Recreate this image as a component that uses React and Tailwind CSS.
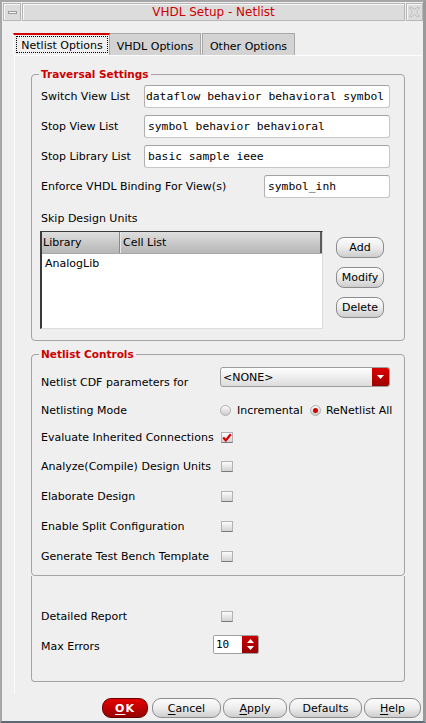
import React from "react";

function TextInput({ value, className }) {
  return (
    <div
      className={
        "h-[23px] bg-white border border-[#c6c6c6] border-t-[#a2a2a2] border-l-[#b0b0b0] rounded-[3px] flex items-center overflow-hidden whitespace-nowrap font-['DejaVu_Sans_Mono',monospace] text-[11.3px] " +
        className
      }
    >
      {value}
    </div>
  );
}

function SmallButton({ children }) {
  return (
    <div className="w-[48px] h-[21px] rounded-[8px] border border-[#8c8c8c] bg-gradient-to-b from-[#fdfdfd] via-[#ececec] to-[#cdcdcd] flex items-center justify-center">
      {children}
    </div>
  );
}

function CheckBox({ checked }) {
  return (
    <div className="w-[12px] h-[11px] border border-[#b2b2b2] border-b-[#7a7a7a] bg-gradient-to-b from-[#fcfcfc] to-[#d2d2d2] flex items-center justify-center">
      {checked && (
        <svg width="10" height="9" viewBox="0 0 10 9">
          <path d="M1.2 4.6 L3.8 7.4 L8.8 1.2" fill="none" stroke="#d40000" strokeWidth="2.2" />
        </svg>
      )}
    </div>
  );
}

function Radio({ selected }) {
  return (
    <div className="w-[11px] h-[11px] rounded-full border border-[#b0b0b0] bg-gradient-to-b from-[#fbfbfb] to-[#cbcbcb] flex items-center justify-center">
      {selected && <div className="w-[5px] h-[5px] rounded-full bg-[#d00000]" />}
    </div>
  );
}

function Row({ h, label, lw, children }) {
  return (
    <div className={"flex items-center " + h}>
      <span className={"shrink-0 " + lw}>{label}</span>
      {children}
    </div>
  );
}

function BottomButton({ className, children }) {
  return (
    <div
      className={
        "h-[20px] rounded-[9px] border border-[#8e8e8e] bg-gradient-to-b from-[#fcfcfc] via-[#ededed] to-[#cecece] flex items-center justify-center " +
        className
      }
    >
      {children}
    </div>
  );
}

export default function App() {
  return (
    <div className="w-[426px] h-[723px] flex flex-col bg-[#efefef] border-t-2 border-l-2 border-r-[3px] border-b-2 border-t-[#a6a6a6] border-l-[#a6a6a6] border-r-[#9a9a9a] border-b-[#5c6a76] font-['DejaVu_Sans',sans-serif] text-[11px] leading-[13px] text-black overflow-hidden">
      {/* Title bar */}
      <div className="mt-[1px] pl-[1px] h-[18px] flex gap-[1px] shrink-0">
        <div className="w-[18px] h-full border border-[#b6b6b6] bg-[#dcdcdc] shadow-[inset_1px_1px_0_#f7f7f7] flex items-center justify-center">
          <div className="w-[9px] h-[3px] border border-[#9c9c9c] bg-[#f6f6f6]" />
        </div>
        <div className="flex-1 h-full border border-[#b6b6b6] bg-[#dcdcdc] shadow-[inset_1px_1px_0_#f7f7f7] flex items-center justify-center text-[12px] text-[#cc0000]">
          VHDL Setup - Netlist
        </div>
        <div className="w-[17px] h-full border border-[#b6b6b6] bg-[#dcdcdc] shadow-[inset_1px_1px_0_#f7f7f7] flex items-center justify-center">
          <svg width="13" height="12" viewBox="0 0 13 12">
            <path
              d="M1.5 1.5 L4 1 L6.5 4 L9 1 L11.5 1.5 L8.5 6 L11.5 10.5 L9 11 L6.5 8 L4 11 L1.5 10.5 L4.5 6 Z"
              fill="none"
              stroke="#a8a8a8"
              strokeWidth="1"
              strokeDasharray="1 1"
            />
          </svg>
        </div>
      </div>

      {/* Tabs */}
      <div className="mt-[12px] ml-[11px] flex h-[22px] shrink-0">
        <div className="w-[97px] h-[22px] border-t-2 border-t-[#d00000] border-l border-l-[#fbfbfb] border-r border-r-[#a8a8a8] bg-[#efefef] pt-[1px] pl-[2px] pr-[1px] pb-[2px] flex">
          <div className="flex-1 border border-dotted border-black flex items-center justify-center pt-[2px]">
            Netlist Options
          </div>
        </div>
        <div className="w-[91px] h-[22px] border-t border-r border-[#a8a8a8] bg-[#d3d3d3] flex items-center justify-center pt-[3px]">
          VHDL Options
        </div>
        <div className="ml-[1px] w-[93px] h-[22px] border-t border-r border-l border-[#a8a8a8] bg-[#d3d3d3] flex items-center justify-center pt-[3px]">
          Other Options
        </div>
      </div>

      {/* Panel */}
      <div className="flex-1 ml-[12px] mr-[1px] border-t border-l border-[#fcfcfc] pl-[16px] pt-[12px] flex flex-col">
        {/* Traversal Settings */}
        <fieldset className="w-[374px] min-w-0 border border-[#a4a4a4] rounded-[4px]">
          <legend className="ml-[7px] px-[2px] text-[10.5px] leading-[13px] font-bold text-[#cc0000]">
            Traversal Settings
          </legend>
          <div className="pl-[9px] pr-[14px] pt-[4px] pb-[11px] flex flex-col">
            <div className="flex flex-col gap-[7px]">
              <div className="h-[23px] flex items-center justify-between">
                <span>Switch View List</span>
                <TextInput className="w-[246px] pl-[1px]" value="dataflow behavior behavioral symbol" />
              </div>
              <div className="h-[23px] flex items-center justify-between">
                <span>Stop View List</span>
                <TextInput className="w-[246px] pl-[3px]" value="symbol behavior behavioral" />
              </div>
              <div className="h-[23px] flex items-center justify-between">
                <span>Stop Library List</span>
                <TextInput className="w-[246px] pl-[3px]" value="basic sample ieee" />
              </div>
              <div className="h-[23px] flex items-center justify-between">
                <span>Enforce VHDL Binding For View(s)</span>
                <TextInput className="w-[126px] pl-[3px]" value="symbol_inh" />
              </div>
            </div>
            <div className="mt-[14px]">Skip Design Units</div>
            <div className="mt-[6px] flex">
              <div className="-ml-[1px] w-[283px] h-[98px] flex flex-col bg-white border-l-2 border-t border-[#3a3a3a] border-r border-b border-r-[#dcdcdc] border-b-[#dcdcdc]">
                <div className="h-[22px] flex bg-gradient-to-b from-[#dedede] to-[#b6b6b6] border-b border-[#a8a8a8]">
                  <div className="w-[78px] border-r border-[#8a8a8a] shadow-[1px_0_0_#e8e8e8] pl-[1px] flex items-center">
                    Library
                  </div>
                  <div className="flex-1 pl-[3px] flex items-center border-r-2 border-[#5a5a5a]">
                    Cell List
                  </div>
                </div>
                <div className="pl-[3px] pt-[3px]">AnalogLib</div>
              </div>
              <div className="ml-[13px] pt-[6px] flex flex-col gap-[9px]">
                <SmallButton>Add</SmallButton>
                <SmallButton>Modify</SmallButton>
                <SmallButton>Delete</SmallButton>
              </div>
            </div>
          </div>
        </fieldset>

        {/* Netlist Controls */}
        <fieldset className="mt-[7px] w-[374px] min-w-0 border border-[#a4a4a4] rounded-[4px]">
          <legend className="ml-[7px] px-[2px] text-[10.5px] leading-[13px] font-bold text-[#cc0000]">
            Netlist Controls
          </legend>
          <div className="pl-[9px] pt-[6px] pb-[4px] flex flex-col">
            <div className="h-[30px] flex items-center">
              <span className="w-[179px] shrink-0">Netlist CDF parameters for</span>
              <div className="self-start w-[170px] h-[20px] flex border border-[#9c9c9c] rounded-[3px] bg-gradient-to-b from-white to-[#dcdcdc] overflow-hidden">
                <span className="flex-1 pl-[2px] flex items-center">&lt;NONE&gt;</span>
                <span className="w-[17px] bg-gradient-to-b from-[#dc0000] to-[#9c0000] flex items-center justify-center">
                  <svg width="7" height="4" viewBox="0 0 7 4">
                    <path d="M0 0 L7 0 L3.5 4 Z" fill="#ffffff" />
                  </svg>
                </span>
              </div>
            </div>
            <div className="h-[26px] flex items-center">
              <span className="w-[179px] shrink-0">Netlisting Mode</span>
              <Radio />
              <span className="ml-[6px]">Incremental</span>
              <span className="ml-[7px]">
                <Radio selected />
              </span>
              <span className="ml-[5px]">ReNetlist All</span>
            </div>
            <Row h="h-[28px]" lw="w-[180px]" label="Evaluate Inherited Connections">
              <CheckBox checked />
            </Row>
            <Row h="h-[30px]" lw="w-[180px]" label="Analyze(Compile) Design Units">
              <CheckBox />
            </Row>
            <Row h="h-[30px]" lw="w-[180px]" label="Elaborate Design">
              <CheckBox />
            </Row>
            <Row h="h-[30px]" lw="w-[180px]" label="Enable Split Configuration">
              <CheckBox />
            </Row>
            <Row h="h-[30px]" lw="w-[180px]" label="Generate Test Bench Template">
              <CheckBox />
            </Row>
          </div>
        </fieldset>

        {/* Bottom group */}
        <div className="w-[374px] border-x border-b border-[#a4a4a4] rounded-b-[4px] pl-[9px] pt-[25px] pb-[20px] flex flex-col">
          <Row h="h-[30px]" lw="w-[180px]" label="Detailed Report">
            <CheckBox />
          </Row>
          <Row h="h-[30px]" lw="w-[172px]" label="Max Errors">
            <div className="w-[46px] h-[19px] flex border border-[#a0a0a0] rounded-[2px] overflow-hidden -mt-[3px]">
              <span className="flex-1 bg-white pl-[2px] flex items-center font-['DejaVu_Sans_Mono',monospace] text-[11px]">
                10
              </span>
              <span className="w-[16px] bg-gradient-to-b from-[#c80000] to-[#980000] flex flex-col items-center justify-center gap-[3px]">
                <svg width="7" height="4" viewBox="0 0 7 4">
                  <path d="M0 4 L7 4 L3.5 0 Z" fill="#ffffff" />
                </svg>
                <svg width="7" height="4" viewBox="0 0 7 4">
                  <path d="M0 0 L7 0 L3.5 4 Z" fill="#ffffff" />
                </svg>
              </span>
            </div>
          </Row>
        </div>
      </div>

      {/* Dialog buttons */}
      <div className="mt-[4px] mb-[3px] h-[20px] flex justify-end gap-[2px] pr-[2px] shrink-0">
        <div className="mr-[2px] w-[46px] h-[20px] rounded-[9px] border border-[#6a0000] bg-gradient-to-b from-[#e40000] via-[#c00000] to-[#960000] text-white font-bold flex items-center justify-center tracking-[1px]">
          <span className="underline underline-offset-[2px]">O</span>K
        </div>
        <BottomButton className="w-[69px]">
          <span className="underline underline-offset-[2px]">C</span>ancel
        </BottomButton>
        <BottomButton className="w-[64px]">
          <span className="underline underline-offset-[2px]">A</span>pply
        </BottomButton>
        <BottomButton className="w-[73px]">Defaults</BottomButton>
        <BottomButton className="w-[57px]">
          <span className="underline underline-offset-[2px]">H</span>elp
        </BottomButton>
      </div>
    </div>
  );
}
